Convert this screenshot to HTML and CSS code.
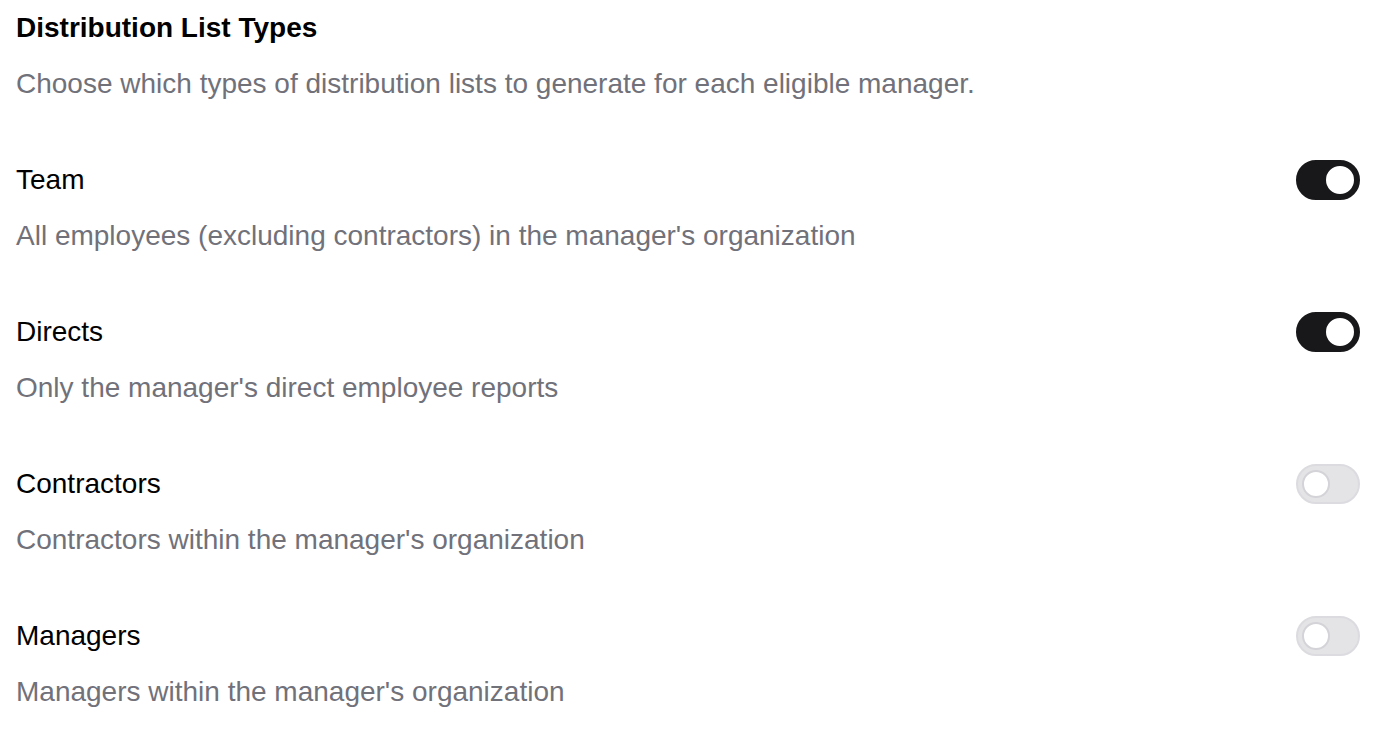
FILE: index.html
```html
<!DOCTYPE html>
<html>
<head>
<meta charset="utf-8">
<link rel="stylesheet" href="styles.css">
</head>
<body>
<section class="panel">
  <h2 class="title">Distribution List Types</h2>
  <p class="lead">Choose which types of distribution lists to generate for each eligible manager.</p>
  <div class="options">
    <div class="option">
      <div class="option-head">
        <span class="label">Team</span>
        <span class="toggle on"><span class="knob"></span></span>
      </div>
      <p class="desc">All employees (excluding contractors) in the manager's organization</p>
    </div>
    <div class="option">
      <div class="option-head">
        <span class="label">Directs</span>
        <span class="toggle on"><span class="knob"></span></span>
      </div>
      <p class="desc">Only the manager's direct employee reports</p>
    </div>
    <div class="option">
      <div class="option-head">
        <span class="label">Contractors</span>
        <span class="toggle"><span class="knob"></span></span>
      </div>
      <p class="desc">Contractors within the manager's organization</p>
    </div>
    <div class="option">
      <div class="option-head">
        <span class="label">Managers</span>
        <span class="toggle"><span class="knob"></span></span>
      </div>
      <p class="desc">Managers within the manager's organization</p>
    </div>
  </div>
</section>
</body>
</html>
```
FILE: styles.css
```css
* { box-sizing: border-box; }
body {
  margin: 0;
  background: #ffffff;
  font-family: "Liberation Sans", Arial, sans-serif;
  color: #000000;
}
.panel {
  padding: 12px 36px 0 16px;
}
.title {
  margin: 0;
  font-size: 28px;
  line-height: 32px;
  font-weight: 700;
  color: #000000;
}
.lead {
  margin: 24px 0 0;
  font-size: 28px;
  line-height: 32px;
  color: #71717a;
}
.options {
  display: flex;
  flex-direction: column;
  gap: 60px;
  margin-top: 60px;
}
.option-head {
  display: flex;
  align-items: center;
  justify-content: space-between;
  height: 40px;
}
.label {
  font-size: 28px;
  line-height: 32px;
}
.desc {
  margin: 20px 0 0;
  font-size: 28px;
  line-height: 32px;
  color: #71717a;
}
.toggle {
  position: relative;
  width: 64px;
  height: 40px;
  border-radius: 20px;
  background: #e4e4e7;
  border: 2px solid #dcdce0;
  display: flex;
  align-items: center;
  padding: 0 4px;
}
.toggle .knob {
  width: 28px;
  height: 28px;
  border-radius: 50%;
  background: #ffffff;
  border: 2px solid #d4d4d8;
}
.toggle.on {
  background: #18181b;
  border-color: #18181b;
  justify-content: flex-end;
}
.toggle.on .knob {
  border-color: #ffffff;
}
```
